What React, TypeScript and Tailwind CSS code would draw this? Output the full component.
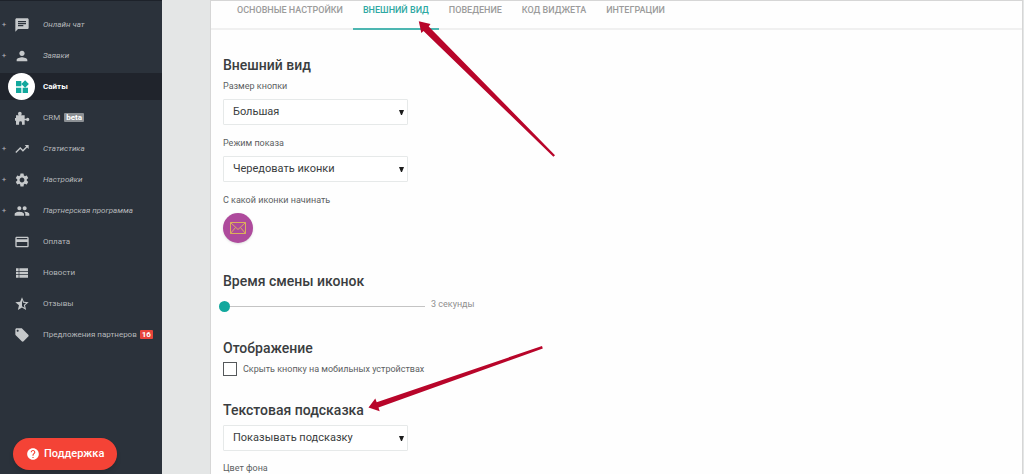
import { useState } from "react";
import type { ReactNode } from "react";
import type { IconType } from "react-icons";
import clsx from "clsx";
import {
  MdChat,
  MdCreditCard,
  MdHelp,
  MdLocalOffer,
  MdPeople,
  MdPerson,
  MdSettings,
  MdStarHalf,
  MdTrendingUp,
  MdViewList,
  MdWidgets,
} from "react-icons/md";

type MenuItem = {
  label: string;
  icon: IconType;
  expandable?: boolean;
  active?: boolean;
  beta?: boolean;
  count?: number;
};

const PuzzleIcon: IconType = ({ className }) => (
  <svg viewBox="0 0 24 24" fill="currentColor" className={className}>
    <path d="M3 8h4.500C6.500 7.400 6 6.500 6 5.500a2.800 2.800 0 0 1 5.600 0c0 1-.5 1.900-1.500 2.500H16v5h2.300c.5-.8 1.300-1.300 2.200-1.300a2.500 2.500 0 0 1 0 5c-.9 0-1.700-.5-2.200-1.300H16V22h-4v-3a2.200 2.200 0 0 0-4.400 0v3H3v-6H1.500v-4H3z" />
  </svg>
);

const menu: MenuItem[] = [
  { label: "Онлайн чат", icon: MdChat, expandable: true },
  { label: "Заявки", icon: MdPerson, expandable: true },
  { label: "Сайты", icon: MdWidgets, active: true },
  { label: "CRM", icon: PuzzleIcon, beta: true },
  { label: "Статистика", icon: MdTrendingUp, expandable: true },
  { label: "Настройки", icon: MdSettings, expandable: true },
  { label: "Партнерская программа", icon: MdPeople, expandable: true },
  { label: "Оплата", icon: MdCreditCard },
  { label: "Новости", icon: MdViewList },
  { label: "Отзывы", icon: MdStarHalf },
  { label: "Предложения партнеров", icon: MdLocalOffer, count: 16 },
];

const tabs = [
  "Основные настройки",
  "Внешний вид",
  "Поведение",
  "Код виджета",
  "Интеграции",
];

function Sidebar() {
  return (
    <aside className="sticky top-0 flex h-screen w-[162px] shrink-0 flex-col border-t border-[#1d222a] bg-[#2b323b] pt-[10px] pb-1">
      <nav>
        <ul className="flex flex-col gap-1">
          {menu.map(({ label, icon: Icon, ...item }) => (
            <li key={label}>
              <a
                href="#"
                className={clsx(
                  "flex h-[27px] items-center text-[8px] whitespace-nowrap",
                  item.active
                    ? "bg-[#20242c] font-bold text-white"
                    : "text-[#b4b7ba]",
                  item.expandable && "italic"
                )}
              >
                <span className="w-2 shrink-0 text-center not-italic">
                  {item.expandable && "+"}
                </span>
                <span
                  className={clsx(
                    "mr-2 flex size-[27px] shrink-0 items-center justify-center rounded-full",
                    item.active ? "bg-white text-[#12a89d]" : "text-[#c6c9cb]"
                  )}
                >
                  <Icon className="size-4" />
                </span>
                {label}
                {item.beta && (
                  <span className="ml-1 rounded-[1px] bg-[#8c9094] px-[2px] text-[8px] leading-[9px] font-bold text-white">
                    beta
                  </span>
                )}
                {item.count && (
                  <span className="ml-[3px] rounded-[1px] bg-[#e8443a] px-[2px] text-[8px] leading-[9px] font-bold text-white">
                    {item.count}
                  </span>
                )}
              </a>
            </li>
          ))}
        </ul>
      </nav>
      <button
        type="button"
        className="mt-auto ml-[13px] flex h-8 items-center gap-1 self-start rounded-full bg-[#f44336] px-[13px] text-[11px] font-medium text-white shadow-md"
      >
        <MdHelp className="size-[14px]" />
        Поддержка
      </button>
    </aside>
  );
}

function Section({ title, children }: { title: string; children: ReactNode }) {
  return (
    <section>
      <h2 className="text-[14px] leading-5 font-medium text-[#3a3d40]">
        {title}
      </h2>
      {children}
    </section>
  );
}

function Select({ id, label, value }: { id: string; label?: string; value: string }) {
  return (
    <div className="relative w-[185px]">
      <select
        id={id}
        aria-label={label}
        className="block h-[26px] w-full appearance-none rounded-[1px] border border-[#e6e9e9] bg-white px-[9px] text-[11px] text-[#3a3d40]"
      >
        <option>{value}</option>
      </select>
      <svg
        viewBox="0 0 5 5"
        className="pointer-events-none absolute top-[11px] right-1 size-[5px]"
      >
        <path d="M0 0h5L3 5H2z" fill="#1c1c1c" />
      </svg>
    </div>
  );
}

function MailIcon() {
  return (
    <svg
      viewBox="0 0 16 12"
      fill="none"
      stroke="#dcb05a"
      className="h-3 w-4"
    >
      <path d="M.5.5h15v11H.5zM.5.500 8 7.500l7.500-7M.500 11.500l5-6M15.500 11.500l-5-6" />
    </svg>
  );
}

// Red pointers drawn over the page
function Pointers() {
  return (
    <svg
      viewBox="0 0 600 420"
      fill="#b8052a"
      className="pointer-events-none absolute top-0 left-0 h-[420px] w-[600px]"
    >
      <path d="M418.800 21.300 430.500 24l-1.800 2.500L555 155.200l-1.600 1.600L423.500 31l-2.200 2z" />
      <path d="M368.500 407.500 375.300 398.500l1.400 3.700L542 346l.8 2.400L378.500 407.500l1.200 3.700z" />
    </svg>
  );
}

export default function App() {
  const [tab, setTab] = useState(1);

  return (
    <div className="relative flex min-h-screen bg-[#e4e6e6] font-[Roboto,sans-serif]">
      <Sidebar />
      <main className="mr-px ml-[48px] min-w-0 flex-1 border-x border-t border-[#d6d6d6] bg-[#fefefe]">
        <div
          role="tablist"
          className="flex border-b-2 border-[#f0f0f0] pl-4"
        >
          {tabs.map((name, index) => (
            <button
              key={name}
              type="button"
              role="tab"
              aria-selected={index === tab}
              onClick={() => setTab(index)}
              className={clsx(
                "-mb-[2px] border-b-2 px-[10px] pt-[2px] pb-[11px] text-[9px] leading-[14px] font-medium whitespace-nowrap uppercase",
                index === tab
                  ? "border-[#4db6b1] text-[#2fa8a2]"
                  : "border-transparent text-[#9b9b9b]"
              )}
            >
              {name}
            </button>
          ))}
        </div>

        <form className="flex flex-col gap-6 pt-[25px] pl-3 text-[9px] leading-3 text-[#5c5f62]">
          <Section title="Внешний вид">
            <label htmlFor="size" className="mt-[5px] mb-[7px] block">
              Размер кнопки
            </label>
            <Select id="size" value="Большая" />
            <label htmlFor="mode" className="mt-3 mb-[7px] block">
              Режим показа
            </label>
            <Select id="mode" value="Чередовать иконки" />
            <p className="mt-3 mb-[7px]">С какой иконки начинать</p>
            <button
              type="button"
              aria-label="Письмо"
              className="mb-1 flex size-[30px] items-center justify-center rounded-full bg-[#ae4a9c] shadow"
            >
              <MailIcon />
            </button>
          </Section>

          <Section title="Время смены иконок">
            <div className="mt-2 flex h-[15px] items-center gap-[6px]">
              <input
                type="range"
                min={3}
                max={30}
                defaultValue={3}
                aria-label="Время смены иконок"
                className="-ml-1 h-[11px] w-[206px] appearance-none bg-transparent [&::-webkit-slider-runnable-track]:h-px [&::-webkit-slider-runnable-track]:bg-[#c4c4c4] [&::-webkit-slider-thumb]:-mt-[5px] [&::-webkit-slider-thumb]:size-[11px] [&::-webkit-slider-thumb]:appearance-none [&::-webkit-slider-thumb]:rounded-full [&::-webkit-slider-thumb]:bg-[#12a89d]"
              />
              <span className="self-start leading-[10px] text-[#8f8f8f]">
                3 секунды
              </span>
            </div>
          </Section>

          <Section title="Отображение">
            <label className="mt-1 flex items-center gap-[6px]">
              <input
                type="checkbox"
                className="size-[14px] appearance-none border border-[#55585b] bg-white checked:bg-[#12a89d]"
              />
              Скрыть кнопку на мобильных устройствах
            </label>
          </Section>

          <Section title="Текстовая подсказка">
            <div className="mt-[5px]">
              <Select
                id="hint"
                label="Текстовая подсказка"
                value="Показывать подсказку"
              />
            </div>
            <p className="mt-[11px]">Цвет фона</p>
          </Section>
        </form>
      </main>
      <Pointers />
    </div>
  );
}
